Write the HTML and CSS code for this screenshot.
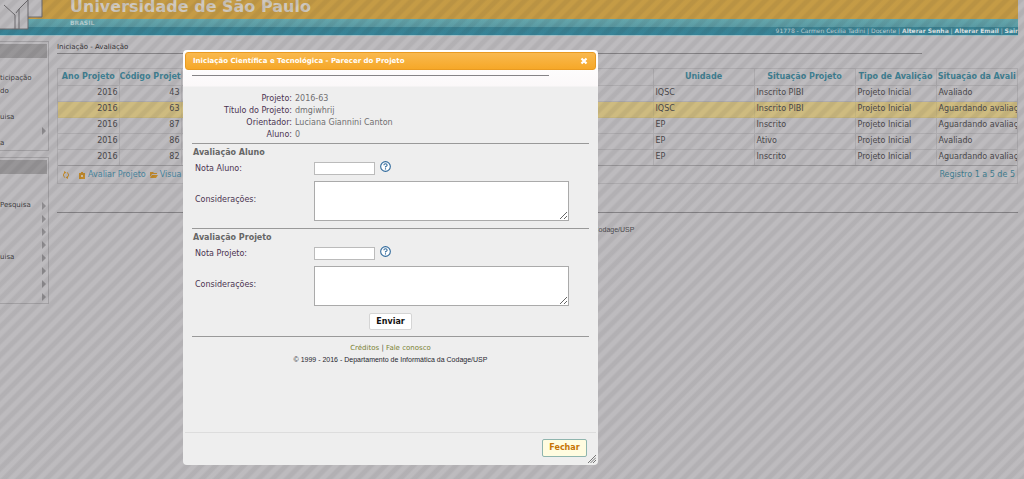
FILE: index.html
```html
<!DOCTYPE html>
<html lang="pt-BR">
<head>
<meta charset="utf-8">
<title>Universidade de São Paulo</title>
<link rel="stylesheet" href="styles.css">
</head>
<body>
<header class="top">
  <svg class="logo" viewBox="0 0 43 30" aria-hidden="true">
    <path class="logo-face" d="M0 0H42V17H28V29H0Z"/>
    <path class="logo-line" d="M42 0V17H28V29H0M28 17V0M4 5L15 15V29M19 29V9L28 0M19 9L16 13"/>
  </svg>
  <div class="brand">Universidade de São Paulo</div>
  <div class="country">BRASIL</div>
  <div class="user"><span>91778 - Carmen Cecilia Tadini | Docente | <a href="#">Alterar Senha</a> | <a href="#">Alterar Email</a> | <a href="#">Sair</a></span></div>
</header>
<div class="page">
  <nav class="side">
    <ul class="menu first">
      <li class="menu-head"></li>
      <li>ticipação</li><li>do</li><li></li><li>uisa</li><li class="sub"></li><li>a</li>
    </ul>
    <ul class="menu second">
      <li class="menu-head"></li>
      <li class="sub">Pesquisa</li><li class="sub"></li><li class="sub"></li><li class="sub"></li><li class="sub">uisa</li><li class="sub"></li><li class="sub"></li><li class="sub"></li>
    </ul>
  </nav>
  <main class="main">
    <div class="crumb">Iniciação - Avaliação</div>
    <hr class="crumb-rule">
    <div class="grid-box">
      <table class="grid">
        <colgroup><col class="c-year"><col class="c-code"><col><col class="c-unit"><col class="c-status"><col class="c-kind"><col class="c-eval"></colgroup>
        <thead><tr><th>Ano Projeto</th><th>Código Projet</th><th></th><th>Unidade</th><th>Situação Projeto</th><th>Tipo de Avalição</th><th>Situação da Avali</th></tr></thead>
        <tbody>
          <tr><td>2016</td><td>43</td><td></td><td>IQSC</td><td>Inscrito PIBI</td><td>Projeto Inicial</td><td>Avaliado</td></tr>
          <tr class="selected"><td>2016</td><td>63</td><td></td><td>IQSC</td><td>Inscrito PIBI</td><td>Projeto Inicial</td><td>Aguardando avaliaç</td></tr>
          <tr><td>2016</td><td>87</td><td></td><td>EP</td><td>Inscrito</td><td>Projeto Inicial</td><td>Aguardando avaliaç</td></tr>
          <tr><td>2016</td><td>86</td><td></td><td>EP</td><td>Ativo</td><td>Projeto Inicial</td><td>Avaliado</td></tr>
          <tr><td>2016</td><td>82</td><td></td><td>EP</td><td>Inscrito</td><td>Projeto Inicial</td><td>Aguardando avaliaç</td></tr>
        </tbody>
      </table>
      <div class="pager">
        <button class="tool refresh" aria-label="Atualizar"><svg viewBox="0 0 8 8"><path d="M3 1.500A2.800 2.800 0 0 0 3 6.500M5 6.500A2.800 2.800 0 0 0 5 1.500" fill="none" stroke="#c58c2b"/><path d="M2 0l2.500 1.500L2 3zM6 5v3L3.500 6.500z" fill="#c58c2b"/></svg></button>
        <button class="tool"><svg viewBox="0 0 8 8"><path d="M1 2h2V1h2v1h2v6H1z" fill="#c58c2b"/><path d="M3 4h2v2H3z" fill="#d5c7ad"/></svg>Avaliar Projeto</button>
        <button class="tool"><svg viewBox="0 0 8 8"><path d="M0 1h3l1 1h3v1H2L0 6zM2 4h6L6 7H0z" fill="#c58c2b"/></svg>Visua</button>
        <span class="count">Registro 1 a 5 de 5</span>
      </div>
    </div>
    <hr class="foot-rule">
    <footer class="copy">© 1999 - 2016 - Departamento de Informática da Codage/USP</footer>
  </main>
</div>
<div class="overlay"></div>
<section class="dialog" role="dialog" aria-labelledby="dlg-title">
  <div class="titlebar">
    <span id="dlg-title">Iniciação Científica e Tecnológica - Parecer do Projeto</span>
    <button class="close" aria-label="Fechar janela"><svg viewBox="0 0 8 8"><path d="M1.500 1.500L6.500 6.500M6.500 1.500L1.500 6.500" stroke="#fff" stroke-width="2.200"/></svg></button>
  </div>
  <form class="content">
    <hr class="top-rule">
    <dl class="info">
      <dt>Projeto:</dt><dd>2016-63</dd>
      <dt>Título do Projeto:</dt><dd>dmgiwhrij</dd>
      <dt>Orientador:</dt><dd>Luciana Giannini Canton</dd>
      <dt>Aluno:</dt><dd>0</dd>
    </dl>
    <div class="group">
      <h2>Avaliação Aluno</h2>
      <div class="field short"><label for="na">Nota Aluno:</label><input id="na" type="text"><svg class="help" viewBox="0 0 10 10"><circle cx="5" cy="5" r="4.400"/><path d="M3.500 3.900Q3.500 2.500 5 2.500T6.500 3.900Q6.500 4.600 5 5.200V6M5 6.700V7.800"/></svg></div>
      <div class="field"><label for="ca">Considerações:</label><textarea id="ca"></textarea></div>
    </div>
    <div class="group">
      <h2>Avaliação Projeto</h2>
      <div class="field short"><label for="np">Nota Projeto:</label><input id="np" type="text"><svg class="help" viewBox="0 0 10 10"><circle cx="5" cy="5" r="4.400"/><path d="M3.500 3.900Q3.500 2.500 5 2.500T6.500 3.900Q6.500 4.600 5 5.200V6M5 6.700V7.800"/></svg></div>
      <div class="field"><label for="cp">Considerações:</label><textarea id="cp"></textarea></div>
    </div>
    <button type="button" class="send">Enviar</button>
    <div class="credits">
      <p><a href="#">Créditos</a> | <a href="#">Fale conosco</a></p>
      <p class="copy dark">© 1999 - 2016 - Departamento de Informática da Codage/USP</p>
    </div>
  </form>
  <div class="actions"><button class="shut">Fechar</button></div>
  <svg class="grip" viewBox="0 0 8 8"><path d="M0 8L8 0M2.500 8L8 2.500M5 8L8 5"/></svg>
</section>
</body>
</html>
```
FILE: styles.css
```css
* { box-sizing: border-box; }
body {
  margin: 0;
  background: #bfbdc0;
  font-family: "DejaVu Sans", Verdana, sans-serif;
  font-size: 8px;
  line-height: 12px;
  color: #4b494c;
}
hr { margin: 0; border: 0; border-top: 1px solid #858386; }
ul, dl, dd, p, h2 { margin: 0; padding: 0; }
ul { list-style: none; }
button, input, textarea { font: inherit; }
svg { display: block; flex: none; }

.top {
  display: grid;
  grid-template-columns: 70px 1fr auto;
  grid-template-rows: 19px 8px 8px;
  height: 36px;
  margin-right: 6px;
  background: linear-gradient(#c79d46 19px, #67a8ad 19px, #5b9ca5 27px, #3c8392 27px, #37859a 35px, #9fc0c6 35px);
}
.logo { grid-row: 1 / 4; width: 43px; height: 30px; }
.logo-face { fill: #bfbdc0; }
.logo-line { fill: none; stroke: #6d6b6e; }
.brand { font-size: 16px; font-weight: bold; line-height: 14px; white-space: nowrap; color: #d2cbc0; }
.country { grid-column: 2; font-size: 6px; font-weight: bold; line-height: 8px; color: #b5cfd2; }
.user { grid-column: 2 / 4; font-size: 6px; line-height: 8px; text-align: right; white-space: nowrap; color: #c4d5da; }
.user a { color: #dfe6e8; font-weight: bold; text-decoration: none; }

.page { display: flex; gap: 8px; margin-right: 6px; padding-top: 5px; }
.side { flex: 0 0 49px; font-size: 7px; line-height: 13px; color: #403e41; }
.menu { height: 110px; padding: 2px 1px 0 0; border: 1px solid #a4a2a5; border-left: 0; }
.menu li { display: flex; height: 13px; white-space: nowrap; }
.menu .menu-head { height: 14px; background: #999799; }
.first .menu-head { margin-bottom: 14px; }
.second { height: 147px; margin-top: 6px; }
.second .menu-head { margin-bottom: 25px; }
.sub::after { content: ""; margin: 3px 1px 0 auto; height: 0; border: solid transparent; border-width: 4px 0 4px 4px; border-left-color: #8f8d90; }

.main { flex: 1; min-width: 0; }
.crumb { font-size: 7px; color: #353336; }
.crumb-rule { width: 90%; }
.grid-box { margin-top: 14px; border: 1px solid #aeacaf; }
.grid { width: 100%; table-layout: fixed; border-collapse: collapse; border-style: hidden; }
.c-year { width: 61px; }
.c-code { width: 62px; }
.c-unit, .c-status { width: 101px; }
.c-kind, .c-eval { width: 81px; }
th, td { height: 16px; padding: 0 2px; overflow: hidden; white-space: nowrap; border: 1px solid #afadb0; text-align: left; }
th { padding: 0; color: #3f8193; text-align: center; }
td { padding: 0 1px 0 2px; color: #4b494c; }
td:nth-child(-n+2) { text-align: right; }
.selected td { background: #d0bd81; border-color: #c5b57e; }
.pager { display: flex; align-items: center; gap: 4px; height: 18px; padding: 0 2px 0 4px; color: #3f8193; border-top: 1px solid #9a989b; }
.tool { display: flex; align-items: center; gap: 2px; padding: 0; border: 0; background: none; color: #4787a0; }
.tool svg { width: 8px; height: 8px; }
.refresh { margin-right: 4px; }
.count { margin-left: auto; }
.foot-rule { margin-top: 28px; }
.copy { font-family: "Liberation Sans", Arial, sans-serif; font-size: 7px; text-align: center; }
.main .copy { margin-top: 11px; }

.overlay {
  position: absolute;
  inset: 0;
  background: repeating-linear-gradient(135deg, rgba(30, 28, 32, .08) 0 3px, rgba(30, 28, 32, .01) 5px 8px, rgba(30, 28, 32, .08) 10px);
  pointer-events: none;
}

.dialog {
  position: absolute;
  top: 50px;
  left: 183px;
  display: flex;
  flex-direction: column;
  width: 415px;
  padding: 2px;
  border-radius: 4px;
  background: linear-gradient(#fff 10px, #fbf8f9 36px, #eee 37px);
}
.titlebar {
  display: flex;
  align-items: center;
  justify-content: space-between;
  height: 18px;
  padding: 0 7px;
  border: 1px solid #e99b22;
  border-radius: 3px;
  background: linear-gradient(#f9b94f, #f6a828);
  color: #fff;
  font-size: 7px;
  font-weight: bold;
}
.close { padding: 0; border: 0; background: none; }
.close svg { width: 8px; height: 8px; }
.content { padding: 5px 7px 0; }
.top-rule { width: 90%; }
.info { display: grid; grid-template-columns: 100px 1fr; gap: 0 3px; padding: 17px 0 2px; }
.info dt { text-align: right; color: #4a3350; }
.info dd { color: #706e71; }
.group { height: 85px; border-top: 1px solid #999; }
h2 { padding: 3px 0 0 1px; font-size: 8px; line-height: 12px; color: #666; }
.field { display: flex; align-items: center; padding-left: 3px; color: #4a3350; }
.field label { flex: 0 0 119px; }
.short { height: 19px; }
.field input { width: 61px; height: 13px; padding: 0 2px; border: 1px solid #bbb; background: #fff; }
.field textarea { width: 255px; height: 40px; margin-top: 3px; padding: 2px; border: 1px solid #aaa; background: #fff; }
.help { width: 11px; height: 11px; margin: 0 0 4px 5px; fill: #fff; stroke: #316a9c; }
.help path { fill: none; }
.send { display: block; width: 43px; height: 17px; margin: 0 auto 6px; padding: 0; border: 1px solid #d5d5d5; border-radius: 2px; background: #fff; color: #111; font-weight: bold; }
.credits { min-height: 96px; padding-top: 5px; border-top: 1px solid #999; font-size: 7px; text-align: center; }
.credits a { color: #7a8232; text-decoration: none; }
.dark { color: #26262e; }
.actions { display: flex; justify-content: flex-end; padding: 6px 9px 6px; border-top: 1px solid #ddd; }
.shut { width: 45px; height: 18px; padding: 0; border: 1px solid #8fb5ae; border-radius: 2px; background: #fffce0; color: #c77405; font-weight: bold; }
.grip { position: absolute; right: 2px; bottom: 2px; width: 8px; height: 8px; stroke: #777; fill: none; }
```
